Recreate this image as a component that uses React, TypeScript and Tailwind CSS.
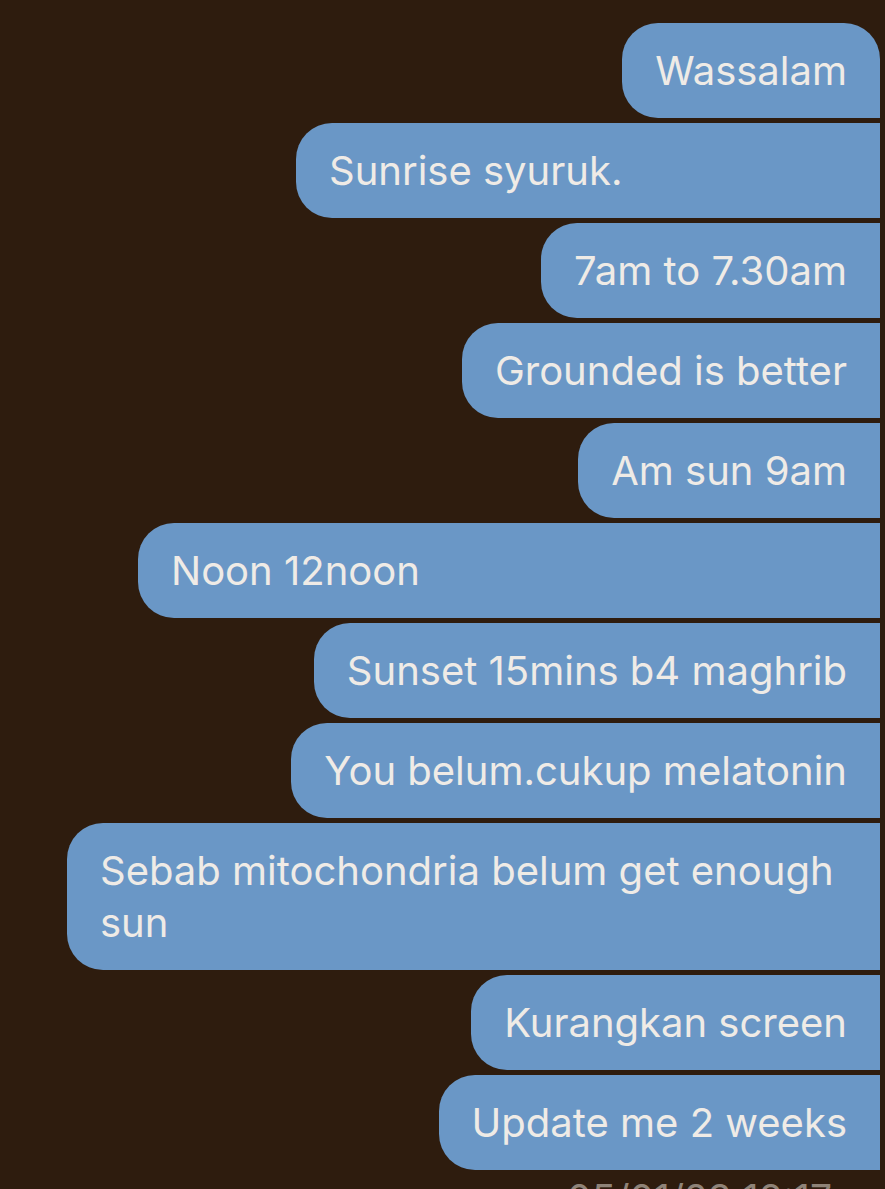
import React from "react";

type Msg = { text: string; pos: "first" | "mid" | "last"; w?: string };

const msgs: Msg[] = [
  { text: "Wassalam", pos: "first" },
  { text: "Sunrise syuruk.", pos: "mid", w: "w-[584px]" },
  { text: "7am to 7.30am", pos: "mid" },
  { text: "Grounded is better", pos: "mid" },
  { text: "Am sun 9am", pos: "mid" },
  { text: "Noon 12noon", pos: "mid", w: "w-[742px]" },
  { text: "Sunset 15mins b4 maghrib", pos: "mid" },
  { text: "You belum.cukup melatonin", pos: "mid" },
  { text: "Sebab mitochondria belum get enough sun", pos: "mid" },
  { text: "Kurangkan screen", pos: "mid" },
  { text: "Update me 2 weeks", pos: "last" },
];

export default function App() {
  return (
    <div
      className="w-[885px] h-[1189px] overflow-hidden bg-[#2e1c0e] flex flex-col items-end pt-[23px] pr-[5px] gap-[5px]"
      style={{ fontFamily: "Inter, 'Liberation Sans', sans-serif" }}
    >
      {msgs.map((m, i) => {
        const radius =
          m.pos === "first"
            ? "rounded-tl-[36px] rounded-tr-[36px] rounded-bl-[36px]"
            : "rounded-l-[36px]";
        return (
          <div
            key={i}
            className={`${radius} ${m.w ?? ""} max-w-[813px] bg-[#6a97c6] text-[#efebe6] text-[40px] leading-[52px] px-[33px] py-[21.5px]`}
          >
            {m.text}
          </div>
        );
      })}
      <div className="pr-[48px] text-[39px] leading-[48px] text-[#8f8378] whitespace-nowrap">
        05/01/23 18:17
      </div>
    </div>
  );
}
